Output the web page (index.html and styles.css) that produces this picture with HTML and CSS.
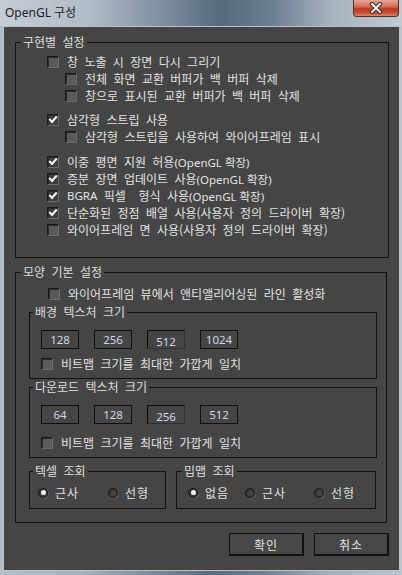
FILE: index.html
```html
<!DOCTYPE html>
<html lang="ko">

<head>
  <meta charset="utf-8">
  <meta name="viewport" content="width=device-width, initial-scale=1.0">
  <title>OpenGL 구성</title>
  <link rel="stylesheet" href="styles.css">
</head>

<body>
  <div id="window">
    <div id="titlebar">
      <span id="title">OpenGL 구성</span>
      <div id="close-btn">
        <svg width="14" height="12" viewBox="0 0 14 12">
          <path d="M3 2 L11 10 M11 2 L3 10" stroke="#3a2a2a" stroke-width="4.2" stroke-linecap="round" fill="none" />
          <path d="M3 2 L11 10 M11 2 L3 10" stroke="#ffffff" stroke-width="2.2" stroke-linecap="round" fill="none" />
        </svg>
      </div>
    </div>

    <main id="client">
      <fieldset class="group" id="impl-group">
        <legend>구현별 설정</legend>
        <div class="group-body">
          <label class="check"><span class="box"></span>창 노출 시 장면 다시 그리기</label>
          <label class="check sub"><span class="box"></span>전체 화면 교환 버퍼가 백 버퍼 삭제</label>
          <label class="check sub"><span class="box"></span>창으로 표시된 교환 버퍼가 백 버퍼 삭제</label>

          <label class="check gap"><span class="box checked"></span>삼각형 스트립 사용</label>
          <label class="check sub"><span class="box"></span>삼각형 스트립을 사용하여 와이어프레임 표시</label>

          <label class="check gap-lg"><span class="box checked"></span>이중 평면 지원 허용<span class="ext">(OpenGL 확장)</span></label>
          <label class="check"><span class="box checked"></span>증분 장면 업데이트 사용<span class="ext">(OpenGL 확장)</span></label>
          <label class="check"><span class="box checked"></span><span class="ext">BGRA</span>&nbsp;픽셀&nbsp; 형식 사용<span class="ext">(OpenGL 확장)</span></label>
          <label class="check"><span class="box checked"></span>단순화된 정점 배열 사용(사용자 정의 드라이버 확장)</label>
          <label class="check"><span class="box"></span>와이어프레임 면 사용(사용자 정의 드라이버 확장)</label>
        </div>
      </fieldset>

      <fieldset class="group" id="look-group">
        <legend>모양 기본 설정</legend>
        <div class="group-body">
          <label class="check aa-row"><span class="box"></span>와이어프레임 뷰에서 앤티앨리어싱된 라인 활성화</label>

          <fieldset class="group inner" id="bg-size">
            <legend>배경 텍스처 크기</legend>
            <div class="inner-body">
              <div class="size-row">
                <button class="size-btn">128</button>
                <button class="size-btn">256</button>
                <button class="size-btn sel">512</button>
                <button class="size-btn">1024</button>
              </div>
              <label class="check fit-row"><span class="box"></span>비트맵 크기를 최대한 가깝게 일치</label>
            </div>
          </fieldset>

          <fieldset class="group inner" id="dl-size">
            <legend>다운로드 텍스처 크기</legend>
            <div class="inner-body">
              <div class="size-row">
                <button class="size-btn">64</button>
                <button class="size-btn">128</button>
                <button class="size-btn sel">256</button>
                <button class="size-btn">512</button>
              </div>
              <label class="check fit-row dl"><span class="box"></span>비트맵 크기를 최대한 가깝게 일치</label>
            </div>
          </fieldset>

          <div class="lookup-row">
            <fieldset class="group inner" id="texel-group">
              <legend>텍셀 조회</legend>
              <div class="radio-row texel">
                <label class="radio"><span class="dot on"></span>근사</label>
                <label class="radio"><span class="dot"></span>선형</label>
              </div>
            </fieldset>
            <fieldset class="group inner" id="mip-group">
              <legend>밉맵 조회</legend>
              <div class="radio-row mip">
                <label class="radio"><span class="dot on"></span>없음</label>
                <label class="radio"><span class="dot"></span>근사</label>
                <label class="radio"><span class="dot"></span>선형</label>
              </div>
            </fieldset>
          </div>
        </div>
      </fieldset>

      <div id="dialog-buttons">
        <button class="dlg-btn">확인</button>
        <button class="dlg-btn">취소</button>
      </div>
    </main>
  </div>
</body>

</html>
```

FILE: styles.css
```css
html {
  height: 100%;
}

body {
  margin: 0;
  width: 402px;
  height: 575px;
  overflow: hidden;
  font-family: "Noto Sans CJK KR", "Noto Sans", sans-serif;
  font-size: 12px;
}

#window {
  width: 402px;
  height: 575px;
  display: flex;
  flex-direction: column;
  background: linear-gradient(90deg, #b3bcc5 0%, #a9b3bd 20%, #7b8b9b 38%, #5a6d80 52%, #6b7d8f 65%, #a0acb8 80%, #bcc5ce 100%);
}

#titlebar {
  height: 26px;
  display: flex;
  align-items: flex-start;
  justify-content: space-between;
  background: linear-gradient(90deg, #c4ccd4 0%, #b2bcc6 22%, #7f90a1 40%, #56697d 55%, #6d8092 68%, #a7b3be 82%, #c2cad2 100%);
}

#title {
  margin: 5px 0 0 5px;
  line-height: 16px;
  color: #1b1f2a;
  font-family: "Noto Sans", "Noto Sans CJK KR", sans-serif;
  font-size: 12px;
}

#close-btn {
  width: 46px;
  height: 17px;
  margin-right: 3px;
  box-sizing: border-box;
  border: 1px solid #5b2b22;
  border-top: none;
  border-radius: 0 0 4px 4px;
  background: linear-gradient(180deg, #e6a796 0%, #d1705a 40%, #bf3a22 55%, #c84c30 80%, #de8a66 100%);
  display: flex;
  align-items: center;
  justify-content: center;
}

#client {
  flex: 1;
  margin: 0 2px 4px 3px;
  border: 1px solid #b9c3cc;
  background-color: #454545;
  display: flex;
  flex-direction: column;
  color: #e2e2e2;
  word-spacing: 3px;
}

.group {
  margin: 0;
  padding: 0;
  border: 1px solid #121212;
  min-width: 0;
}

.group legend {
  margin-left: 5px;
  padding: 0 2px;
  line-height: 14px;
  color: #dedede;
}

#impl-group {
  margin: 8px 10px 0 11px;
}

#impl-group .group-body {
  padding: 4px 0 19px 31px;
}

#look-group {
  margin: 7px 12px 0 11px;
}

#look-group .group-body {
  padding: 6px 9px 13px 13px;
}

.check {
  height: 17px;
  display: flex;
  align-items: center;
  white-space: nowrap;
}

.check.sub {
  margin-left: 18px;
}

.check.gap {
  margin-top: 7px;
}

.check.gap-lg {
  margin-top: 8px;
}

.ext {
  font-family: "Noto Sans", "Noto Sans CJK KR", sans-serif;
  font-size: 11.5px;
  word-spacing: 0;
}

.box {
  width: 12px;
  height: 12px;
  margin-right: 8px;
  box-sizing: border-box;
  border: 1px solid;
  border-color: #1a1a1a #6c6c6c #6c6c6c #1a1a1a;
  box-shadow: inset 1px 1px 0 #2a2a2a;
  background-color: #5a5a5a;
  flex-shrink: 0;
  display: flex;
  align-items: center;
  justify-content: center;
}

.box.checked {
  background-color: #3e3e3e;
}

.box.checked::after {
  content: "";
  width: 6px;
  height: 3px;
  margin-top: -2px;
  border-left: 2px solid #f4f4f4;
  border-bottom: 2px solid #f4f4f4;
  transform: rotate(-48deg);
}

.aa-row {
  margin-left: 19px;
}

.group.inner legend {
  margin-left: 3px;
}

#bg-size {
  margin-top: 3px;
}

#dl-size {
  margin-top: 1px;
}

.inner-body {
  padding: 11px 0 6px 11px;
}

.size-row {
  display: flex;
  gap: 15px;
}

.size-btn {
  width: 38px;
  height: 19px;
  margin: 0;
  padding: 0;
  box-sizing: border-box;
  border: 1px solid #101010;
  background-color: #454545;
  color: #cfd8e6;
  font-family: "Noto Sans", sans-serif;
  font-size: 11.5px;
  line-height: 17px;
}

.size-btn.sel {
  border-color: #0a0a0a #303030 #303030 #0a0a0a;
  padding-top: 2px;
}

.fit-row {
  margin-top: 6px;
}

.fit-row.dl {
  margin-top: 10px;
}

.lookup-row {
  margin-top: 6px;
  display: flex;
  gap: 10px;
}

#texel-group {
  width: 137px;
  box-sizing: border-box;
}

#mip-group {
  width: 200px;
  box-sizing: border-box;
}

#mip-group legend {
  margin-left: 5px;
}

.radio-row {
  display: grid;
  padding: 6px 0 7px 0;
}

.radio-row.texel {
  grid-template-columns: 70px auto;
  padding-left: 8px;
}

.radio-row.mip {
  grid-template-columns: 57px 69px auto;
  padding-left: 11px;
}

.radio {
  height: 17px;
  display: flex;
  align-items: center;
  white-space: nowrap;
  letter-spacing: 1px;
}

.dot {
  width: 10px;
  height: 10px;
  margin-right: 7px;
  box-sizing: border-box;
  border-radius: 50%;
  border: 1px solid #151515;
  background: radial-gradient(circle at 60% 60%, #4a4a4a 0%, #2c2c2c 100%);
  box-shadow: 1px 1px 0 #5c5c5c;
  display: flex;
  align-items: center;
  justify-content: center;
}

.dot.on::after {
  content: "";
  width: 5px;
  height: 5px;
  border-radius: 50%;
  background-color: #f0f0f0;
}

#dialog-buttons {
  margin: 10px 10px 0 0;
  display: flex;
  justify-content: flex-end;
  gap: 10px;
}

.dlg-btn {
  width: 75px;
  height: 23px;
  margin: 0;
  padding: 0;
  box-sizing: border-box;
  border: 1px solid #111;
  border-right-width: 2px;
  border-bottom-width: 2px;
  background-color: #474747;
  color: #e2e2e2;
  font-family: "Noto Sans CJK KR", sans-serif;
  font-size: 12px;
  letter-spacing: 1px;
}
```
